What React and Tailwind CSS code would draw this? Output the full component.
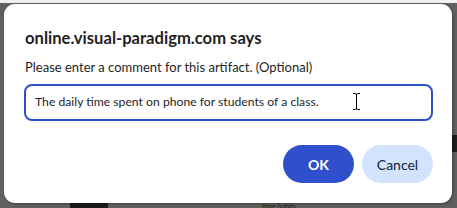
import React from 'react';

function IBeam() {
    return (
        <svg width="9" height="17" viewBox="0 0 9 17" className="absolute left-[317px] top-[7px]">
            <path d="M1 0.5h2.5M5.5 0.5h2.5M4.5 1v15M1 16.5h2.5M5.5 16.5h2.5" stroke="#000" strokeWidth="1" fill="none" />
            <path d="M3.5 1h2M3.5 16h2" stroke="#000" strokeWidth="1" />
        </svg>
    );
}

export default function App() {
    return (
        <div className="relative w-[457px] h-[208px] overflow-hidden bg-[#606060] font-['Lato',sans-serif]">
            {/* page behind the dialog */}
            <div className="h-[3px] bg-[#eef0f6]"></div>
            <div className="absolute right-0 top-[135px] w-[6px] h-[17px] bg-[#1e1e1e]"></div>
            <div className="absolute left-[70px] top-[203px] w-[38px] h-[5px] bg-[#1c1c1c]"></div>
            <div className="absolute left-[262px] top-[203px] text-[7px] leading-[7px] text-[#222]">time habits.</div>

            <div className="absolute left-[4px] top-[4px] w-[448px] h-[199px] bg-white rounded-[11px] shadow-[1px_1px_3px_rgba(0,0,0,0.35)] px-[21px] pt-[24px]">
                <h1 className="text-[16.6px] leading-[20px] font-bold text-[#1f1f1f]">online.visual-paradigm.com says</h1>
                <p className="mt-[10px] text-[13px] leading-[18px] text-[#1f1f1f]">Please enter a comment for this artifact. (Optional)</p>
                <div className="mt-[8px] -ml-[1px] w-[409px] h-[37px] rounded-[8px] border-2 border-[#2f4fc9] flex items-center px-[9px]">
                    <div className="relative flex-1 h-full flex items-center">
                        <span className="text-[12.2px] text-[#1f1f1f]">The daily time spent on phone for students of a class.</span>
                        <IBeam />
                    </div>
                </div>
                <div className="mt-[24px] flex justify-end gap-[8px] -mr-[2px]">
                    <button className="w-[71px] h-[38px] rounded-full bg-[#2f4fcc] text-white text-[14px] font-bold">OK</button>
                    <button className="w-[71px] h-[38px] rounded-full bg-[#d3e3fd] text-[#0f1c3c] text-[14px]">Cancel</button>
                </div>
            </div>
        </div>
    );
}
